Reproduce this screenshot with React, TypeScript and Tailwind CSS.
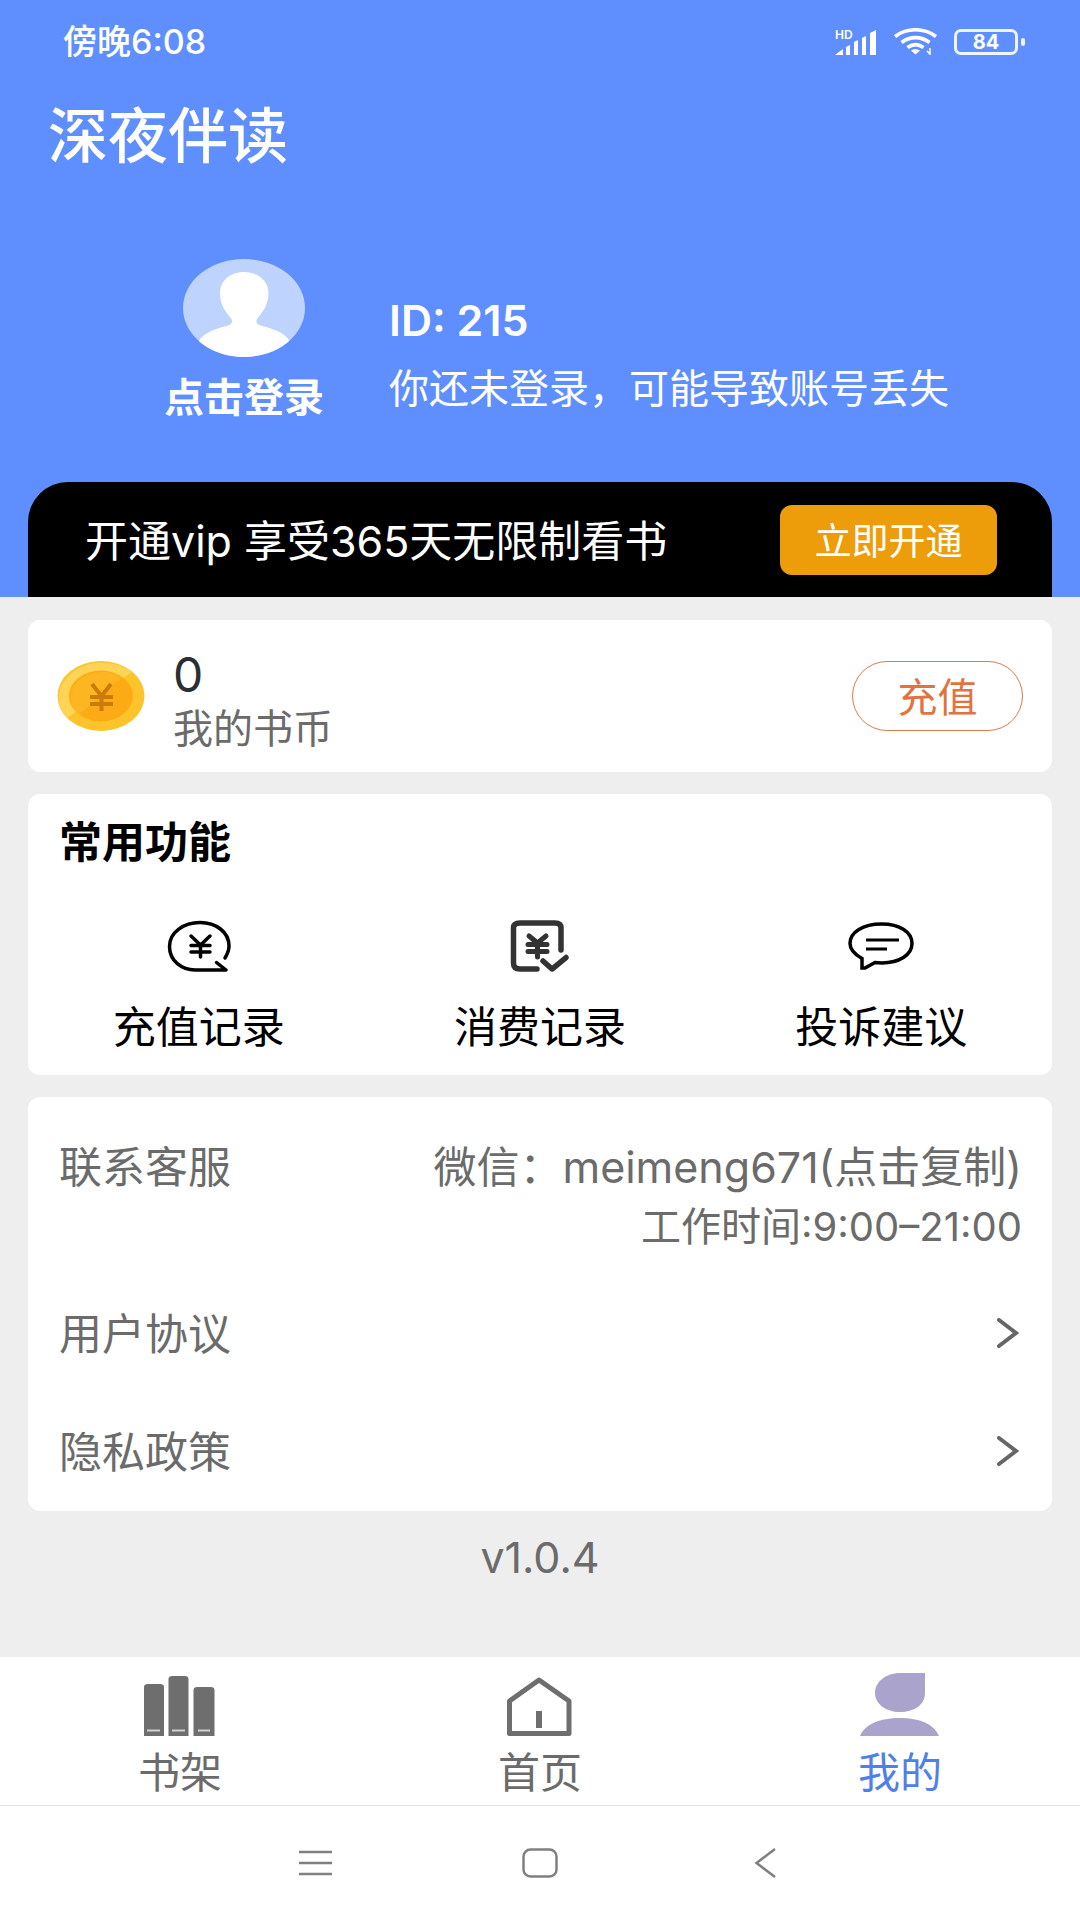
import React from 'react'

const shortcuts = [
  { label: '充值记录', icon: <RechargeIcon /> },
  { label: '消费记录', icon: <SpendIcon /> },
  { label: '投诉建议', icon: <FeedbackIcon /> },
]

const policies = ['用户协议', '隐私政策']

const tabs = [
  { label: '书架', icon: <ShelfIcon />, active: false },
  { label: '首页', icon: <HomeIcon />, active: false },
  { label: '我的', icon: <MineIcon />, active: true },
]

function SignalIcon() {
  return (
    <svg width="44" height="32" viewBox="0 0 44 32" fill="currentColor">
      <text x="1" y="13" fontSize="12" fontWeight="600">HD</text>
      <path d="M1 29 9 23V29zM12 21l4-2v10h-4zM20 16l4-2v15h-4zM28 12l4-2v19h-4zM36 7l6-3v25h-6z" />
    </svg>
  )
}

function WifiIcon() {
  return (
    <svg width="44" height="28" viewBox="0 0 44 28" fill="none" stroke="currentColor" strokeWidth="3.6">
      <path d="M1 8.5C13-.5 30-.5 42 8.5M7.500 14.500C16 8 27 8 35.500 14.500M13.500 19.500C19 15.500 24 15.500 29.500 19.500" />
      <path d="M17 22.500c3-2 6-2 9 0l-4.500 4z" fill="currentColor" stroke="none" />
      <path d="M36 20v7M33 23l3 3" strokeWidth="1.5" />
    </svg>
  )
}

function Avatar() {
  return (
    <svg width="122" height="98" viewBox="0 0 122 98">
      <defs>
        <clipPath id="avatar">
          <ellipse cx="61" cy="49" rx="61" ry="49" />
        </clipPath>
      </defs>
      <g clipPath="url(#avatar)">
        <rect width="122" height="98" fill="#bfd3ff" />
        <path d="M61 13c14 0 24.500 9 24.500 21 0 11-5 18-10 24-4 5-2 8 4 9 12 3 24 8 27 15v20H16V82c3-7 15-12 27-15 6-1 8-4 4-9-5-6-10-13-10-24 0-12 10-21 24-21z" fill="#fff" />
      </g>
    </svg>
  )
}

function CoinIcon() {
  return (
    <svg width="88" height="70" viewBox="0 0 88 70">
      <ellipse cx="44" cy="35" rx="43.500" ry="35" fill="#fcc42a" />
      <path d="M10 57A43.500 35 0 0 1 75 11z" fill="#fdd455" />
      <ellipse cx="44" cy="35" rx="32" ry="25.500" fill="#fcab14" />
      <path d="M22 53.500A32 25.500 0 0 1 65 16z" fill="#fdb521" />
      <path d="M35 23l9.500 12 9.500-12M44.500 35v15M33 36h23M33 43h23" fill="none" stroke="#c97c08" strokeWidth="4" />
    </svg>
  )
}

function RechargeIcon() {
  return (
    <svg width="64" height="52" viewBox="0 0 64 52" fill="none" stroke="#000" strokeWidth="3.500" strokeLinecap="round" strokeLinejoin="round">
      <path d="M58 38C61 33 62 30 62 26 62 12 49 2.500 33 2.500S2.500 12 2.500 26.500 15 50 28 50H59L49.500 42.500" />
      <path d="M24 16l9.500 9 9.500-9M33.500 25v12M24 25.500h19M24 32h19" />
    </svg>
  )
}

function SpendIcon() {
  return (
    <svg width="60" height="52" viewBox="0 0 60 52" fill="none" stroke="#333" strokeWidth="5.500" strokeLinecap="round" strokeLinejoin="round">
      <path d="M27 49H10Q3.500 49 3.500 43V8Q3.500 3 10 3H45Q51 3 51 8V30" />
      <path d="M19 16l8.500 7 8.500-7M27.500 24v13M18 24.500h19M18 31.500h19" strokeWidth="5" />
      <path d="M33 41l9 8 14-11.500" />
    </svg>
  )
}

function FeedbackIcon() {
  return (
    <svg width="66" height="48" viewBox="0 0 66 48" fill="none" stroke="#000" strokeWidth="3.500">
      <path d="M14 36.500C6 32 2 27 2 21.500 2 10 15 2 33.500 2S64 10 64 21.500 51 41 34 41q-4-.500-7-.500L17 46h-3z" />
      <path d="M18 18h33M18 27h21" strokeWidth="3" />
    </svg>
  )
}

function ShelfIcon() {
  return (
    <svg width="74" height="63" viewBox="0 0 74 63">
      <path d="M1 63V14q0-3 4-3h12q4 0 4 3v49zM25.500 63V6q0-3 4-3h12q4 0 4 3v57zM50.500 63V17q0-3 4-3h13q4 0 4 3v46z" fill="#6e6e6e" />
      <path d="M4 57.500h13M29 57.500h13M55 57.500h12" stroke="#d0d0d0" strokeWidth="2" />
    </svg>
  )
}

function HomeIcon() {
  return (
    <svg width="68" height="63" viewBox="0 0 68 63" fill="none" stroke="#6e6e6e" strokeWidth="5" strokeLinejoin="round">
      <path d="M33 7 63 28V60.500H3.500V28z" />
      <path d="M33 38v17" strokeWidth="6" />
    </svg>
  )
}

function MineIcon() {
  return (
    <svg width="80" height="63" viewBox="0 0 80 63" fill="#aaa3cc">
      <path d="M40 0H65V20C65 32 54 39 40 39S15 31 15 20 26 0 40 0zM0 63C5 51 20 45 40 45S74 51 79 63z" />
    </svg>
  )
}

function ChevronIcon() {
  return (
    <svg width="26" height="32" viewBox="0 0 26 32" fill="none" stroke="#666" strokeWidth="4" strokeLinecap="round">
      <path d="M3 2 20 15 3 28" />
    </svg>
  )
}

function StatusBar() {
  return (
    <div className="flex h-[84px] items-center justify-between pl-[63px] pr-[55px]">
      <span className="text-[34px] font-medium leading-none">傍晚6:08</span>
      <div className="flex items-center gap-4">
        <SignalIcon />
        <WifiIcon />
        <div className="flex items-center gap-[3px]">
          <span className="flex h-[26px] w-[64px] items-center justify-center rounded-[7px] border-3 border-white/90 text-[20px] font-bold leading-none">
            84
          </span>
          <span className="h-2 w-1 rounded-sm bg-white/90" />
        </div>
      </div>
    </div>
  )
}

function Header() {
  return (
    <header className="bg-[#5f8fff] text-white">
      <StatusBar />
      <h1 className="pl-12 pt-1 text-[60px] font-medium leading-[96px]">深夜伴读</h1>
      <div className="flex items-start gap-[65px] pb-[60px] pl-[164px] pt-[75px]">
        <button type="button" className="flex w-[160px] flex-col items-center gap-[17px] whitespace-nowrap">
          <Avatar />
          <span className="text-[40px] font-bold leading-[48px]">点击登录</span>
        </button>
        <div className="flex flex-col gap-[21px] pt-[37px] leading-[48px]">
          <p className="text-[43px] font-semibold">ID: 215</p>
          <p className="text-[40px]">你还未登录，可能导致账号丢失</p>
        </div>
      </div>
      <div className="mx-7 flex h-[115px] items-center justify-between rounded-t-[40px] bg-black pl-[57px] pr-[55px]">
        <p className="pt-1 text-[43px]">开通vip 享受365天无限制看书</p>
        <button type="button" className="h-[70px] w-[217px] rounded-xl bg-[#ee9d0a] pt-1 text-[37px] leading-none">
          立即开通
        </button>
      </div>
    </header>
  )
}

export default function App() {
  return (
    <div className="flex min-h-screen flex-col bg-[#eeeeef] font-['Inter','Noto_Sans_CJK_SC',sans-serif] text-[#6b6b6b]">
      <Header />

      <main className="flex flex-1 flex-col gap-[22px] px-7 pb-10 pt-[23px]">
        <section className="flex h-[152px] items-center rounded-xl bg-white pl-[29px] pr-[29px]">
          <CoinIcon />
          <div className="ml-7 flex-1 pt-3 leading-[54px]">
            <p className="text-[48px] text-[#2b2f33]">0</p>
            <p className="text-[40px]">我的书币</p>
          </div>
          <button type="button" className="h-[70px] w-[171px] rounded-full border border-[#dc7a4c] pt-1 text-[40px] leading-none text-[#e2733f]">
            充值
          </button>
        </section>

        <section className="rounded-xl bg-white py-6">
          <h2 className="pl-[31px] text-[43px] font-bold leading-[48px] text-black">常用功能</h2>
          <div className="mt-[54px] grid grid-cols-3">
            {shortcuts.map(item => (
              <button type="button" key={item.label} className="flex flex-col items-center gap-[31px] text-black">
                <span className="flex h-[52px] items-center">{item.icon}</span>
                <span className="text-[43px] leading-[48px]">{item.label}</span>
              </button>
            ))}
          </div>
        </section>

        <section className="rounded-xl bg-white pl-[31px] pr-[30px] pt-10 text-[43px]">
          <div className="flex justify-between pb-[18px] leading-[60px]">
            <span>联系客服</span>
            <div className="text-right">
              <button type="button" className="block">微信：meimeng671(点击复制)</button>
              <p className="text-[40px]">工作时间:9:00–21:00</p>
            </div>
          </div>
          {policies.map(label => (
            <a href="#" key={label} className="flex h-[118px] items-center justify-between">
              <span>{label}</span>
              <ChevronIcon />
            </a>
          ))}
        </section>

        <p className="text-center text-[43px] leading-[48px]">v1.0.4</p>
      </main>

      <nav className="grid grid-cols-3 border-b border-[#e6e6e6] bg-white pb-2 pt-4">
        {tabs.map(tab => (
          <a href="#" key={tab.label} className="flex flex-col items-center gap-[13px]">
            {tab.icon}
            <span className={tab.active ? 'text-[42px] leading-[48px] text-[#4f7fe8]' : 'text-[42px] leading-[48px]'}>
              {tab.label}
            </span>
          </a>
        ))}
      </nav>

      <div className="bg-white">
        <div className="mx-auto grid h-[114px] w-5/8 grid-cols-3 place-items-center">
          <button type="button" aria-label="菜单">
            <svg width="34" height="26" viewBox="0 0 34 26" stroke="#808080" strokeWidth="2.500">
              <path d="M1 2h33M1 13h33M1 24h33" />
            </svg>
          </button>
          <button type="button" aria-label="主屏幕">
            <svg width="36" height="30" viewBox="0 0 36 30" fill="none" stroke="#808080" strokeWidth="2.500">
              <rect x="1.500" y="1.500" width="33" height="27" rx="7" />
            </svg>
          </button>
          <button type="button" aria-label="返回">
            <svg width="22" height="32" viewBox="0 0 22 32" fill="none" stroke="#808080" strokeWidth="2.500">
              <path d="M21 2 2.500 16 21 30" />
            </svg>
          </button>
        </div>
      </div>
    </div>
  )
}
